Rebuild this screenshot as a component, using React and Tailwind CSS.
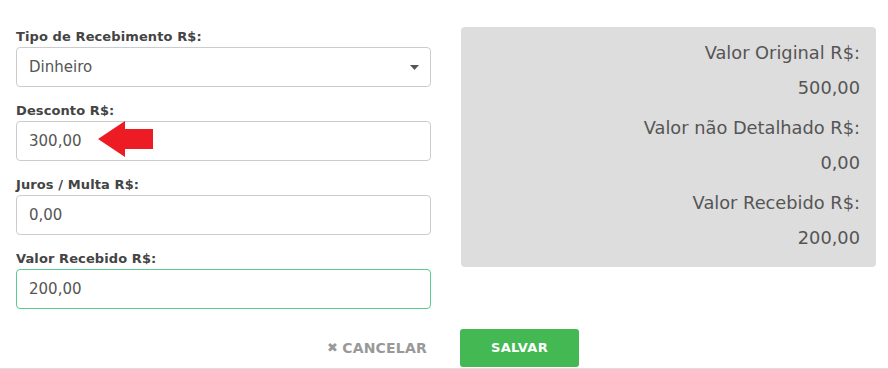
import React from "react";

const font = { fontFamily: '"DejaVu Sans", "Open Sans", sans-serif' };

function Field({ label, value, select, green, arrow }) {
  return (
    <div className="flex flex-col">
      <label className="text-[13px] leading-[17px] font-bold text-[#444] mb-[2px] tracking-[0.1px]">{label}</label>
      <div
        className={`relative h-[40px] rounded-[4px] border bg-white flex items-center pl-[12px] text-[15px] text-[#555] ${
          green ? "border-[#5ccb8e]" : "border-[#cccccc]"
        }`}
      >
        <span>{value}</span>
        {select && (
          <svg className="absolute right-[11px] top-[17px]" width="9" height="5" viewBox="0 0 9 5">
            <polygon points="0,0 9,0 4.5,5" fill="#555" />
          </svg>
        )}
        {arrow && (
          <svg className="absolute left-[81px] top-[-1px]" width="56" height="38" viewBox="0 0 56 38">
            <polygon points="0,18 27,0 27,8 55,8 55,28 27,28 27,36" fill="#ed1c24" />
          </svg>
        )}
      </div>
    </div>
  );
}

export default function App() {
  return (
    <div style={font} className="w-[888px] h-[369px] bg-white border-b border-[#dddddd] overflow-hidden flex flex-col pl-[16px] pr-[12px]">
      <div className="grid grid-cols-[415px_415px] gap-x-[30px]">
        <div className="flex flex-col gap-[15px] pt-[28px]">
          <Field label="Tipo de Recebimento R$:" value="Dinheiro" select />
          <Field label="Desconto R$:" value="300,00" arrow />
          <Field label="Juros / Multa R$:" value="0,00" />
          <Field label="Valor Recebido R$:" value="200,00" green />
        </div>
        <div className="pt-[27px]">
          <div className="bg-[#dddddd] rounded-[4px] pt-[8px] pb-[12px] pr-[16px] flex flex-col gap-[5px] text-right text-[17.8px] text-[#555]">
            <div className="flex flex-col">
              <span className="leading-[35px]">Valor Original R$:</span>
              <span className="leading-[35px]">500,00</span>
            </div>
            <div className="flex flex-col">
              <span className="leading-[35px]">Valor não Detalhado R$:</span>
              <span className="leading-[35px]">0,00</span>
            </div>
            <div className="flex flex-col">
              <span className="leading-[35px]">Valor Recebido R$:</span>
              <span className="leading-[35px]">200,00</span>
            </div>
          </div>
        </div>
      </div>
      <div className="grid grid-cols-[415px_415px] gap-x-[30px] mt-[20px]">
        <div className="flex justify-end items-center pr-[4px]">
          <button className="flex items-center gap-[4px] text-[14px] font-bold text-[#999] tracking-[0.2px]">
            <span className="text-[13px]">✖</span>
            <span>CANCELAR</span>
          </button>
        </div>
        <div className="ml-[-1px]">
          <button className="w-[119px] h-[38px] rounded-[3px] bg-[#43b853] text-white text-[13px] font-bold tracking-[0.3px]">
            SALVAR
          </button>
        </div>
      </div>
    </div>
  );
}
